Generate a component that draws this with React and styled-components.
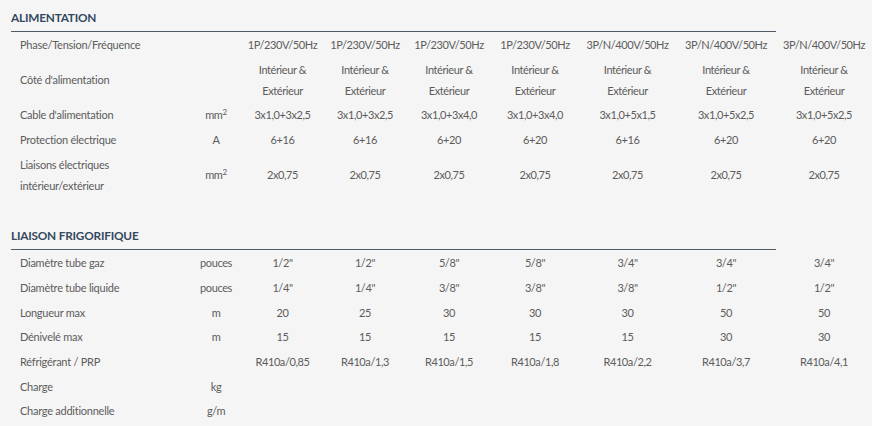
import React from "react";
import styled, { createGlobalStyle } from "styled-components";

const Global = createGlobalStyle`
  html, body { margin: 0; padding: 0; background: #f5f5f5; }
  body { font-family: "Lato", "Open Sans", sans-serif; }
`;

const Page = styled.div`
  width: 872px;
  height: 426px;
  overflow: hidden;
  background: #f5f5f5;
  padding: 8px 0 0 11px;
  box-sizing: border-box;
`;

const Section = styled.section`
  & + & { margin-top: 29px; }
`;

const Heading = styled.h2`
  width: 765px;
  margin: 0;
  padding: 0 0 3px 0;
  border-bottom: 1px solid #4e5a66;
  font-family: "Lato", sans-serif;
  font-weight: 700;
  font-size: 11.8px;
  line-height: 20px;
  color: #34495e;
  letter-spacing: -0.2px;
`;

const Row = styled.div`
  display: grid;
  grid-template-columns: 179px 52px 81px 84px 84px 88px 97px 100px 96px;
  align-items: center;
  font-size: 11px;
  line-height: 21px;
  color: #5c5c5c;
`;

const Cell = styled.div`
  padding: 1.85px 0;
  text-align: ${(p) => (p.$label ? "left" : "center")};
  padding-left: ${(p) => (p.$label ? "9px" : "0")};
  white-space: ${(p) => (p.$label ? "normal" : "nowrap")};
  letter-spacing: ${(p) => (p.$label ? "-0.25px" : "-0.4px")};
`;

const Sup = styled.sup`
  font-size: 8px;
  line-height: 0;
  vertical-align: 4px;
`;

const sq = (
  <>
    mm<Sup>2</Sup>
  </>
);

const alim = [
  {
    label: "Phase/Tension/Fréquence",
    unit: "",
    vals: ["1P/230V/50Hz", "1P/230V/50Hz", "1P/230V/50Hz", "1P/230V/50Hz", "3P/N/400V/50Hz", "3P/N/400V/50Hz", "3P/N/400V/50Hz"],
  },
  {
    label: "Côté d'alimentation",
    unit: "",
    vals: Array(7).fill(
      <>
        Intérieur &amp;
        <br />
        Extérieur
      </>
    ),
  },
  {
    label: "Cable d'alimentation",
    unit: sq,
    vals: ["3x1,0+3x2,5", "3x1,0+3x2,5", "3x1,0+3x4,0", "3x1,0+3x4,0", "3x1,0+5x1,5", "3x1,0+5x2,5", "3x1,0+5x2,5"],
  },
  {
    label: "Protection électrique",
    unit: "A",
    vals: ["6+16", "6+16", "6+20", "6+20", "6+16", "6+20", "6+20"],
  },
  {
    label: (
      <>
        Liaisons électriques
        <br />
        intérieur/extérieur
      </>
    ),
    unit: sq,
    vals: Array(7).fill("2x0,75"),
  },
];

const frigo = [
  { label: "Diamètre tube gaz", unit: "pouces", vals: ["1/2\"", "1/2\"", "5/8\"", "5/8\"", "3/4\"", "3/4\"", "3/4\""] },
  { label: "Diamètre tube liquide", unit: "pouces", vals: ["1/4\"", "1/4\"", "3/8\"", "3/8\"", "3/8\"", "1/2\"", "1/2\""] },
  { label: "Longueur max", unit: "m", vals: ["20", "25", "30", "30", "30", "50", "50"] },
  { label: "Dénivelé max", unit: "m", vals: ["15", "15", "15", "15", "15", "30", "30"] },
  { label: "Réfrigérant / PRP", unit: "", vals: ["R410a/0,85", "R410a/1,3", "R410a/1,5", "R410a/1,8", "R410a/2,2", "R410a/3,7", "R410a/4,1"] },
  { label: "Charge", unit: "kg", vals: Array(7).fill("") },
  { label: "Charge additionnelle", unit: "g/m", vals: Array(7).fill("") },
];

function Table({ title, rows }) {
  return (
    <Section>
      <Heading>{title}</Heading>
      {rows.map((r, i) => (
        <Row key={i}>
          <Cell $label>{r.label}</Cell>
          <Cell>{r.unit}</Cell>
          {r.vals.map((v, j) => (
            <Cell key={j}>{v}</Cell>
          ))}
        </Row>
      ))}
    </Section>
  );
}

export default function App() {
  return (
    <>
      <Global />
      <Page>
        <Table title="ALIMENTATION" rows={alim} />
        <Table title="LIAISON FRIGORIFIQUE" rows={frigo} />
      </Page>
    </>
  );
}
